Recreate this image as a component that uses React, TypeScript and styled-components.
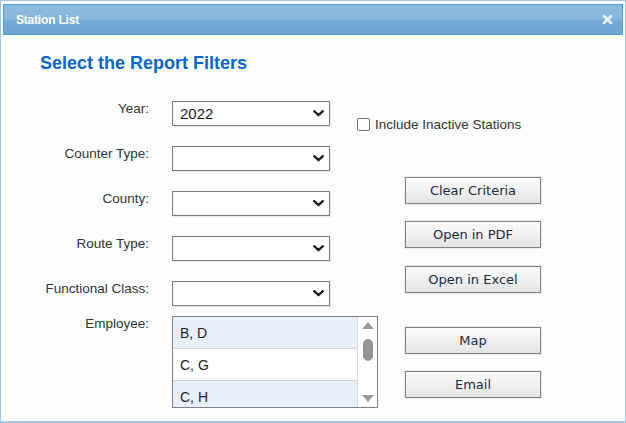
import React from "react";
import styled, { createGlobalStyle } from "styled-components";

const GlobalStyle = createGlobalStyle`
  html, body {
    margin: 0;
    padding: 0;
    background: #fcfefe;
  }
  * {
    box-sizing: border-box;
  }
`;

const LABEL_FONT = `"Liberation Sans", Arial, sans-serif`;
const BUTTON_FONT = `"DejaVu Sans", Verdana, sans-serif`;

interface FilterRow {
  label: string;
  value?: string;
}

const filterRows: FilterRow[] = [
  { label: "Year:", value: "2022" },
  { label: "Counter Type:" },
  { label: "County:" },
  { label: "Route Type:" },
  { label: "Functional Class:" },
];

const employees = ["B, D", "C, G", "C, H"];

const actions = [
  { text: "Clear Criteria", gap: 44 },
  { text: "Open in PDF", gap: 17 },
  { text: "Open in Excel", gap: 18 },
  { text: "Map", gap: 34 },
  { text: "Email", gap: 17 },
];

function Chevron() {
  return (
    <svg width="11" height="7" viewBox="0 0 11 7">
      <path
        d="M1.2 1.2 L5.5 5.2 L9.8 1.2"
        fill="none"
        stroke="#1d1d1d"
        strokeWidth="2.3"
        strokeLinecap="round"
        strokeLinejoin="round"
      />
    </svg>
  );
}

function CloseIcon() {
  return (
    <svg width="11" height="11" viewBox="0 0 11 11">
      <path
        d="M2 2 L9 9 M9 2 L2 9"
        stroke="#e6eff8"
        strokeWidth="2.8"
        strokeLinecap="round"
      />
    </svg>
  );
}

function App() {
  return (
    <>
      <GlobalStyle />
      <Dialog>
        <TitleBar>
          <Title>Station List</Title>
          <CloseButton>
            <CloseIcon />
          </CloseButton>
        </TitleBar>
        <Body>
          <Heading>Select the Report Filters</Heading>
          <Columns>
            <FormColumn>
              {filterRows.map((row) => (
                <Row key={row.label}>
                  <Label>{row.label}</Label>
                  <SelectBox>
                    <SelectValue>{row.value ?? ""}</SelectValue>
                    <Chevron />
                  </SelectBox>
                </Row>
              ))}
              <Row $top={10}>
                <Label>Employee:</Label>
                <ListBox>
                  <ListItems>
                    {employees.map((name, i) => (
                      <ListItem key={name} $tinted={i % 2 === 0}>
                        {name}
                      </ListItem>
                    ))}
                  </ListItems>
                  <ScrollBar>
                    <ArrowUp />
                    <Thumb />
                    <ArrowDown />
                  </ScrollBar>
                </ListBox>
              </Row>
            </FormColumn>
            <ActionColumn>
              <CheckRow>
                <CheckBox />
                <CheckLabel>Include Inactive Stations</CheckLabel>
              </CheckRow>
              {actions.map((a) => (
                <ActionButton key={a.text} $gap={a.gap}>
                  {a.text}
                </ActionButton>
              ))}
            </ActionColumn>
          </Columns>
        </Body>
      </Dialog>
    </>
  );
}

export default App;

const Dialog = styled.div`
  width: 626px;
  height: 423px;
  border: 1px solid #a3c8e6;
  border-bottom-width: 2px;
  background: #fcfefe;
  padding: 3px 2px 0;
  overflow: hidden;
`;

const TitleBar = styled.div`
  display: flex;
  align-items: center;
  justify-content: space-between;
  height: 31px;
  padding: 0 9px 0 12px;
  border: 1px solid #4f9de0;
  background: linear-gradient(
    to bottom,
    #8dbbdf 0%,
    #88b7dc 48%,
    #74aad5 56%,
    #6da5d2 100%
  );
`;

const Title = styled.span`
  color: #ffffff;
  font-family: ${LABEL_FONT};
  font-weight: bold;
  font-size: 12px;
  letter-spacing: -0.2px;
`;

const CloseButton = styled.span`
  display: flex;
  align-items: center;
`;

const Body = styled.div`
  padding: 18px 0 0 37px;
`;

const Heading = styled.h2`
  margin: 0;
  color: #0a66c9;
  font-family: ${LABEL_FONT};
  font-weight: bold;
  font-size: 18px;
  line-height: 21px;
`;

const Columns = styled.div`
  display: flex;
  margin-top: 27px;
`;

const FormColumn = styled.div`
  flex: 0 0 290px;
  width: 290px;
  min-width: 0;
  display: flex;
  flex-direction: column;
  gap: 20px;
`;

const Row = styled.div<{ $top?: number }>`
  display: flex;
  align-items: flex-start;
  gap: 23px;
  margin-top: ${(p) => (p.$top !== undefined ? p.$top - 20 : 0)}px;
`;

const Label = styled.div`
  flex: 0 0 109px;
  text-align: right;
  white-space: nowrap;
  color: #333333;
  font-family: ${LABEL_FONT};
  font-size: 13.5px;
  line-height: 15px;
`;

const SelectBox = styled.div`
  display: flex;
  align-items: center;
  justify-content: space-between;
  flex: 0 0 158px;
  height: 25px;
  padding: 0 5px 0 7px;
  background: #ffffff;
  border: 1px solid #7b7b7b;
  box-shadow: 1px 1px 1px rgba(0, 0, 0, 0.08);
`;

const SelectValue = styled.span`
  color: #1e1e1e;
  font-family: ${LABEL_FONT};
  font-size: 15px;
`;

const ListBox = styled.div`
  display: flex;
  flex: 0 0 206px;
  height: 92px;
  border: 1px solid #808080;
  background: #ffffff;
  overflow: hidden;
`;

const ListItems = styled.div`
  flex: 1;
  display: flex;
  flex-direction: column;
`;

const ListItem = styled.div<{ $tinted: boolean }>`
  flex: 0 0 32px;
  display: flex;
  align-items: center;
  padding-left: 7px;
  border-bottom: 1px solid #d3d3d3;
  background: ${(p) => (p.$tinted ? "#e8f0fd" : "#ffffff")};
  color: #1e1e1e;
  font-family: ${LABEL_FONT};
  font-size: 14px;
`;

const ScrollBar = styled.div`
  flex: 0 0 20px;
  display: flex;
  flex-direction: column;
  align-items: center;
  border-left: 1px solid #dcdcdc;
  background: #ffffff;
  padding-top: 5px;
`;

const ArrowUp = styled.div`
  width: 0;
  height: 0;
  border-left: 6px solid transparent;
  border-right: 6px solid transparent;
  border-bottom: 7px solid #9d9d9d;
`;

const Thumb = styled.div`
  width: 10px;
  height: 22px;
  margin-top: 10px;
  border-radius: 5px;
  background: #959595;
`;

const ArrowDown = styled.div`
  width: 0;
  height: 0;
  margin-top: auto;
  margin-bottom: 5px;
  border-left: 6px solid transparent;
  border-right: 6px solid transparent;
  border-top: 7px solid #9d9d9d;
`;

const ActionColumn = styled.div`
  display: flex;
  flex-direction: column;
  align-items: flex-start;
  padding: 15px 0 0 27px;
`;

const CheckRow = styled.label`
  display: flex;
  align-items: center;
  gap: 5px;
  height: 17px;
`;

const CheckBox = styled.span`
  width: 13px;
  height: 13px;
  border: 1px solid #767676;
  border-radius: 2px;
  background: #ffffff;
`;

const CheckLabel = styled.span`
  color: #333333;
  font-family: ${LABEL_FONT};
  font-size: 13.5px;
  white-space: nowrap;
`;

const ActionButton = styled.button<{ $gap: number }>`
  width: 136px;
  height: 27px;
  margin: ${(p) => p.$gap}px 0 0 48px;
  padding: 0;
  border: 1px solid #818181;
  box-shadow: 0 0 0 1px #ececec;
  background: linear-gradient(to bottom, #fbfbfb 0%, #eeeeee 60%, #e4e4e4 100%);
  color: #1b2a3f;
  font-family: ${BUTTON_FONT};
  font-size: 13px;
  cursor: pointer;
`;
